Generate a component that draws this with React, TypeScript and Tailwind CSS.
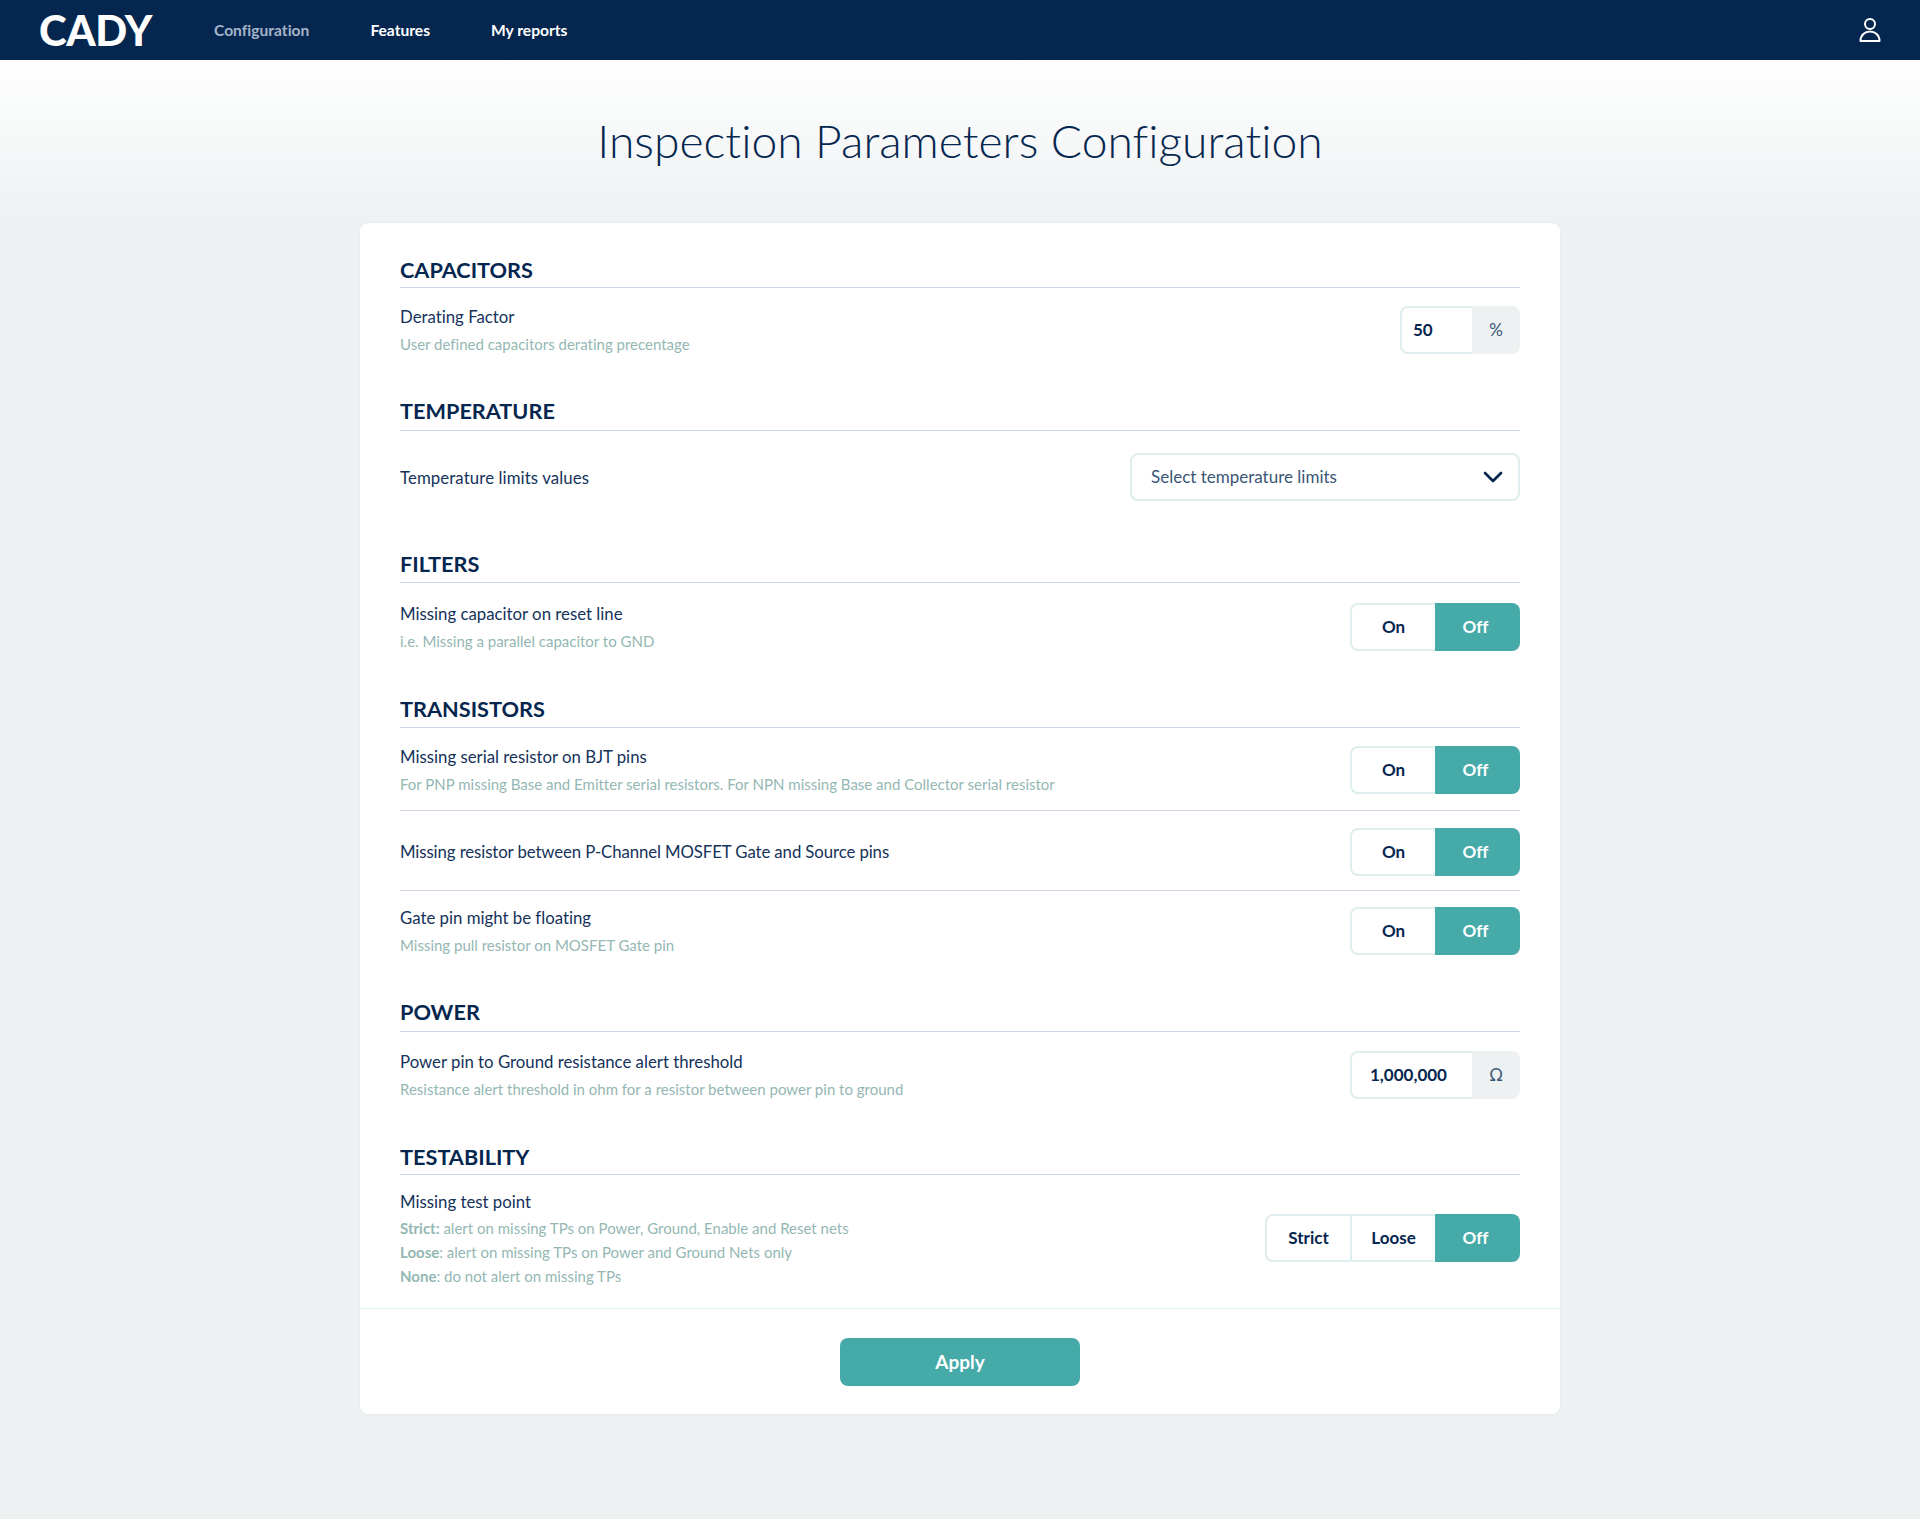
import { ChevronDown } from "lucide-react";
import type { ReactNode } from "react";

const NAV = [
  { label: "Configuration", className: "text-[#a5b4c8]" },
  { label: "Features", className: "text-white" },
  { label: "My reports", className: "text-white" },
];

function SectionTitle({ children, className = "" }: { children: ReactNode; className?: string }) {
  return (
    <h2 className={`border-b border-[#ccd8e3] text-[21.7px] leading-[30px] font-bold text-[#05264f] ${className}`}>
      {children}
    </h2>
  );
}

function Label({ title, hint, titleClass = "" }: { title: string; hint?: ReactNode; titleClass?: string }) {
  return (
    <div>
      <div className={`text-[16.8px] leading-[24px] text-[#14325a] ${titleClass}`}>{title}</div>
      {hint && <div className="mt-[3px] text-[15px] leading-[24px] text-[#94b7b4]">{hint}</div>}
    </div>
  );
}

function Segmented({ options, className = "mb-0.5" }: { options: string[]; className?: string }) {
  return (
    <div className={`flex h-12 text-[17px] font-bold text-[#05264f] ${className}`}>
      {options.map((o, i) => (
        <div
          key={o}
          className={`flex w-[85px] items-center justify-center border-y-2 border-l-2 border-[#deeded] ${i === 0 ? "rounded-l-lg" : ""}`}
        >
          {o}
        </div>
      ))}
      <div className="flex w-[85px] items-center justify-center rounded-r-lg bg-[#46aaa9] pr-1 text-white">Off</div>
    </div>
  );
}

function UnitInput({ value, unit, className }: { value: string; unit: string; className: string }) {
  return (
    <div className="mb-0.5 flex h-12 rounded-lg bg-[#edf1f2] text-[17px] text-[#05264f]">
      <div className={`flex items-center rounded-l-lg border-y-2 border-l-2 border-[#deeded] bg-white font-bold ${className}`}>{value}</div>
      <div className="flex w-12 items-center justify-center text-[#3a5676]">{unit}</div>
    </div>
  );
}

export default function App() {
  return (
    <div className="min-h-[1519px] bg-[#edf1f2] font-['Lato',sans-serif] [font-variant-ligatures:none]">
      <header className="flex h-[60px] items-center bg-[#05264f] pr-[39px] pl-[39px]">
        <div className="w-[175px] text-[42px] leading-none font-black tracking-[-0.5px] text-white">CADY</div>
        <nav className="flex flex-1 gap-[61px] pt-0.5 text-[15.6px] font-bold">
          {NAV.map((n) => (
            <span key={n.label} className={n.className}>{n.label}</span>
          ))}
        </nav>
        <svg width="22" height="26" viewBox="0 0 22 26" fill="none" stroke="white" strokeWidth="2">
          <circle cx="11" cy="7" r="5" />
          <path d="M1.500 24C1.500 18 6 14.500 11 14.500S20.500 18 20.500 24Z" strokeLinejoin="round" />
        </svg>
      </header>

      <main className="bg-gradient-to-b from-white to-[#edf1f2] bg-[length:100%_163px] bg-no-repeat pt-[50px] pb-[105px]">
        <h1 className="text-center text-[46.200px] leading-[60px] font-light text-[#05264f]">
          Inspection Parameters Configuration
        </h1>

        <div className="mx-auto mt-[53px] w-[1200px] rounded-lg bg-white shadow-[0_0_2px_rgba(5,38,79,0.08)]">
          <div className="px-10 pt-8 pb-5">
            <SectionTitle className="pb-[2px]">CAPACITORS</SectionTitle>
            <div className="flex items-center justify-between pt-[17px]">
              <Label title="Derating Factor" hint="User defined capacitors derating precentage" />
              <UnitInput value="50" unit="%" className="w-[72px] pl-[11px]" />
            </div>

            <SectionTitle className="mt-10 pb-1">TEMPERATURE</SectionTitle>
            <div className="flex items-center justify-between pt-[22px]">
              <Label title="Temperature limits values" titleClass="mt-0.5 tracking-[0.1px]" />
              <div className="flex h-12 w-[390px] items-center justify-between rounded-lg border-2 border-[#deeded] pr-[9px] pl-[19px] text-[17px] text-[#3a5676]">
                Select temperature limits
                <ChevronDown className="h-8 w-8 text-[#05264f]" strokeWidth={2} />
              </div>
            </div>

            <SectionTitle className="mt-12 pb-[3px]">FILTERS</SectionTitle>
            <div className="flex items-center justify-between pt-[19px]">
              <Label title="Missing capacitor on reset line" hint="i.e. Missing a parallel capacitor to GND" />
              <Segmented options={["On"]} />
            </div>

            <SectionTitle className="mt-[41px] pb-[3px]">TRANSISTORS</SectionTitle>
            <div className="flex items-center justify-between border-b border-[#ccd8e3] pt-[17px] pb-[14px]">
              <Label title="Missing serial resistor on BJT pins" hint="For PNP missing Base and Emitter serial resistors. For NPN missing Base and Collector serial resistor" />
              <Segmented options={["On"]} />
            </div>
            <div className="flex items-center justify-between border-b border-[#ccd8e3] pt-[17px] pb-[14px]">
              <Label title="Missing resistor between P-Channel MOSFET Gate and Source pins" titleClass="tracking-[-0.1px]" />
              <Segmented options={["On"]} className="" />
            </div>
            <div className="flex items-center justify-between pt-[15px]">
              <Label title="Gate pin might be floating" hint="Missing pull resistor on MOSFET Gate pin" />
              <Segmented options={["On"]} />
            </div>

            <SectionTitle className="mt-10 pb-1">POWER</SectionTitle>
            <div className="flex items-center justify-between pt-[18px]">
              <Label title="Power pin to Ground resistance alert threshold" hint="Resistance alert threshold in ohm for a resistor between power pin to ground" />
              <UnitInput value="1,000,000" unit="Ω" className="w-[122px] pl-[18px]" />
            </div>

            <SectionTitle className="mt-[41px] pb-[2px]">TESTABILITY</SectionTitle>
            <div className="flex items-center justify-between pt-[15px]">
              <div>
                <Label title="Missing test point" />
                <div className="mt-[2px] text-[15px] leading-[24px] text-[#94b7b4]">
                  <div><b>Strict:</b> alert on missing TPs on Power, Ground, Enable and Reset nets</div>
                  <div><b>Loose</b>: alert on missing TPs on Power and Ground Nets only</div>
                  <div><b>None</b>: do not alert on missing TPs</div>
                </div>
              </div>
              <Segmented options={["Strict", "Loose"]} />
            </div>
          </div>

          <div className="flex justify-center border-t border-[#deeded] pt-[29px] pb-7">
            <div className="flex h-12 w-60 items-center justify-center rounded-lg bg-[#46aaa9] text-[19px] font-bold text-white">
              Apply
            </div>
          </div>
        </div>
      </main>
    </div>
  );
}
